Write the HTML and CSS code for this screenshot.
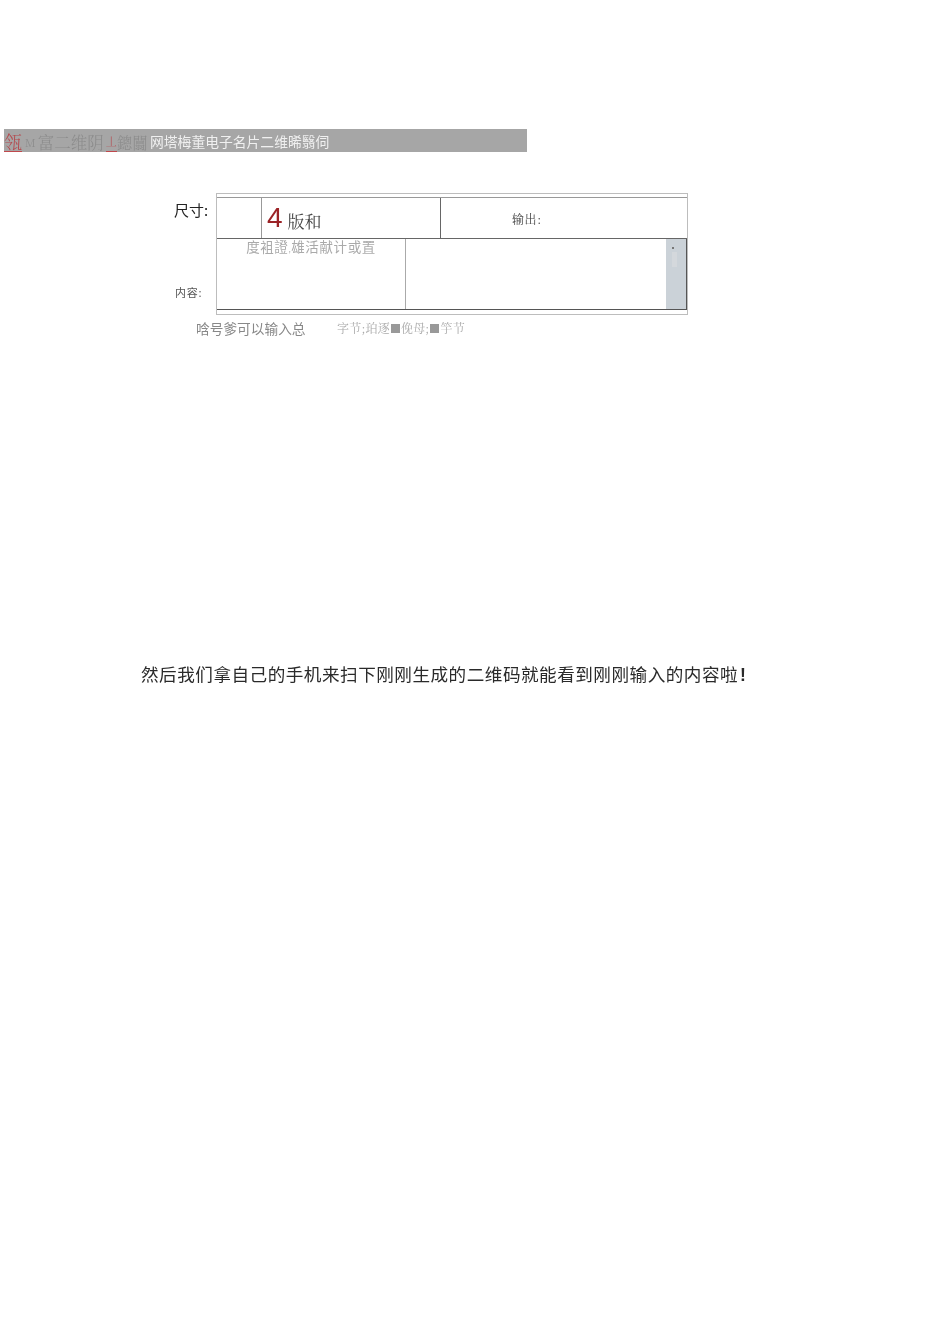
FILE: index.html
```html
<!DOCTYPE html>
<html lang="zh">
<head>
<meta charset="utf-8">
<title>二维码</title>
<link rel="stylesheet" href="styles.css">
</head>
<body>
<header class="banner">
  <span class="banner-old"><span class="red big">瓴</span><span class="m">M</span><span class="fu">富二维阴</span><span class="red narrow">丄</span><span class="tail">鏓闒</span></span><span class="banner-new">网塔梅董电子名片二维晞翳伺</span>
</header>
<section class="form">
  <div class="labels">
    <div class="label-size">尺寸:</div>
    <div class="label-content">内容:</div>
  </div>
  <div class="box">
    <div class="row-top">
      <div class="cell-blank"></div>
      <div class="cell-version"><span class="num">4</span><span class="version-text">版和</span></div>
      <div class="cell-output">输出:</div>
    </div>
    <div class="row-main">
      <div class="cell-input">度袓證<span class="tiny">,</span>雄活献计或置</div>
      <div class="cell-output-area">
        <div class="scroll"><span class="dot"></span><span class="thumb"></span></div>
      </div>
    </div>
  </div>
</section>
<div class="hint">
  <span class="hint-a">唅号爹可以输入总</span>
  <span class="hint-b">字节;珀逐<i class="sq"></i>俛母;<i class="sq"></i>竽节</span>
</div>
<p class="caption">然后我们拿自己的手机来扫下刚刚生成的二维码就能看到刚刚输入的内容啦<span class="bang">!</span></p>
</body>
</html>
```
FILE: styles.css
```css
html, body {
  margin: 0;
  padding: 0;
  background: #fff;
}
body {
  width: 950px;
  height: 1344px;
  overflow: hidden;
  padding-top: 129px;
  box-sizing: border-box;
  font-family: "Noto Sans CJK SC", "Liberation Sans", sans-serif;
}
.banner {
  margin-left: 4px;
  width: 523px;
  height: 23px;
  background: #a6a6a6;
  display: flex;
  align-items: center;
  white-space: nowrap;
}
.banner-old {
  font-family: "Noto Serif CJK SC", "Noto Sans CJK SC", serif;
  font-size: 16.5px;
  font-weight: 300;
  color: #8c8c8c;
  width: 146px;
  flex: none;
  filter: blur(0.45px);
  display: flex;
  align-items: center;
  height: 23px;
  line-height: 20px;
  padding-top: 3px;
  box-sizing: border-box;
}
.banner-old .red {
  color: #b5474c;
  border-bottom: 1px solid #c0484c;
}
.banner-old .big {
  font-size: 18px;
  line-height: 19px;
}
.banner-old .narrow {
  font-size: 11px;
  line-height: 19px;
  margin-left: 2px;
}
.banner-old .m {
  font-size: 11px;
  margin: 0 2px 0 3px;
}
.banner-old .tail {
  font-size: 15.5px;
}
.banner-new {
  font-size: 13.8px;
  color: #f0f0f0;
  filter: blur(0.35px);
}
.form {
  display: flex;
  margin-top: 41px;
  margin-left: 174px;
}
.labels {
  width: 42px;
  height: 122px;
  display: flex;
  flex-direction: column;
}
.label-size {
  font-size: 15px;
  line-height: 18px;
  margin-top: 8px;
  color: #222;
  white-space: nowrap;
  filter: blur(0.3px);
}
.label-content {
  font-size: 11px;
  line-height: 14px;
  margin-top: 66px;
  margin-left: 1px;
  color: #555;
  white-space: nowrap;
  letter-spacing: 0.8px;
  filter: blur(0.3px);
}
.box {
  width: 472px;
  height: 122px;
  box-sizing: border-box;
  border: 1px solid #bdbdbd;
  padding-top: 3px;
  padding-bottom: 4px;
  display: flex;
  flex-direction: column;
}
.row-top {
  display: flex;
  height: 42px;
  box-sizing: border-box;
  border-top: 1px solid #999;
  border-bottom: 1px solid #666;
}
.cell-blank {
  width: 44px;
  border-right: 1px solid #999;
}
.cell-version {
  width: 179px;
  border-right: 1px solid #666;
  display: flex;
  align-items: center;
  padding-left: 5px;
  box-sizing: border-box;
}
.num {
  font-family: "Liberation Sans", sans-serif;
  font-size: 28px;
  line-height: 40px;
  color: #9b2226;
  filter: blur(0.3px);
}
.version-text {
  font-family: "Noto Serif CJK SC", "Noto Sans CJK SC", serif;
  font-size: 17px;
  color: #444;
  margin-left: 5px;
  margin-top: 5px;
  filter: blur(0.3px);
}
.cell-output {
  flex: 1;
  font-family: "Noto Serif CJK SC", "Noto Sans CJK SC", serif;
  font-size: 12px;
  letter-spacing: 0.6px;
  color: #444;
  padding: 13px 0 0 71px;
  line-height: 16px;
  filter: blur(0.3px);
}
.row-main {
  display: flex;
  flex: 1;
  border-bottom: 1px solid #555;
}
.cell-input {
  width: 188px;
  border-right: 1px solid #aaa;
  font-size: 13.5px;
  letter-spacing: 0.6px;
  line-height: 14px;
  color: #aaa;
  text-align: center;
  filter: blur(0.3px);
}
.tiny {
  font-size: 8px;
}
.cell-output-area {
  flex: 1;
  display: flex;
  justify-content: flex-end;
  border-right: 1px solid #555;
}
.scroll {
  width: 20px;
  background: #cbd2d8;
  display: flex;
  flex-direction: column;
  align-items: flex-start;
  padding: 8px 0 0 6px;
  box-sizing: border-box;
}
.dot {
  width: 2px;
  height: 2px;
  background: #777;
}
.thumb {
  width: 5px;
  height: 15px;
  margin-top: 3px;
  background: #d4d8dc;
}
.hint {
  display: flex;
  align-items: center;
  margin-top: 3px;
  margin-left: 196px;
  white-space: nowrap;
}
.hint-a {
  font-size: 13.7px;
  line-height: 20px;
  color: #888;
  width: 141px;
  flex: none;
  filter: blur(0.3px);
}
.hint-b {
  font-family: "Noto Serif CJK SC", "Noto Sans CJK SC", serif;
  font-size: 12px;
  letter-spacing: 0.2px;
  line-height: 16px;
  color: #aaa;
  filter: blur(0.3px);
}
.sq {
  display: inline-block;
  width: 9px;
  height: 9px;
  background: #999;
  margin: 0 1px;
}
.caption {
  margin: 324px 0 0 141px;
  font-size: 17.6px;
  letter-spacing: 0.5px;
  line-height: 24px;
  color: #2a2a2a;
  white-space: nowrap;
  filter: blur(0.2px);
}
.bang {
  font-family: "Liberation Sans", sans-serif;
  font-weight: 700;
  margin-left: 2px;
}
```
